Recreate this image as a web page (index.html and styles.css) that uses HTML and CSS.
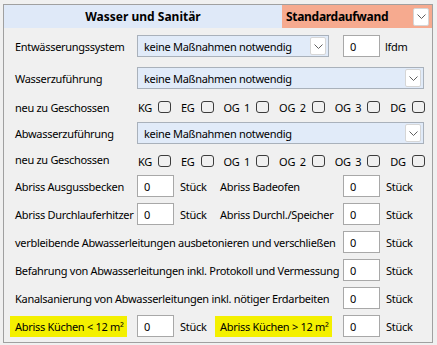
FILE: index.html
```html
<!DOCTYPE html>
<html lang="de">
<head>
    <meta charset="UTF-8">
    <meta name="viewport" content="width=device-width, initial-scale=1.0">
    <title>Wasser und Sanitär</title>
    <link rel="stylesheet" href="styles.css">
</head>
<body>
    <div class="panel">
        <div class="panel-head">
            <div class="head-title">Wasser und Sanitär</div>
            <div class="head-mode">
                <span>Standardaufwand</span>
                <span class="drop-btn head-btn"><svg width="9" height="5" viewBox="0 0 9 5"><polyline points="0.5,0.5 4.5,4.5 8.5,0.5" fill="none" stroke="#606060"/></svg></span>
            </div>
        </div>

        <div class="form">
            <!-- Entwässerung -->
            <span class="lbl">Entwässerungssystem</span>
            <div class="select sel-short">
                <span>keine Maßnahmen notwendig</span>
                <span class="drop-btn"><svg width="9" height="5" viewBox="0 0 9 5"><polyline points="0.5,0.5 4.5,4.5 8.5,0.5" fill="none" stroke="#606060"/></svg></span>
            </div>
            <div class="num col5">0</div>
            <span class="unit col6">lfdm</span>

            <!-- Wasserzuführung -->
            <span class="lbl">Wasserzuführung</span>
            <div class="select sel-long">
                <span>keine Maßnahmen notwendig</span>
                <span class="drop-btn"><svg width="9" height="5" viewBox="0 0 9 5"><polyline points="0.5,0.5 4.5,4.5 8.5,0.5" fill="none" stroke="#606060"/></svg></span>
            </div>

            <span class="lbl">neu zu Geschossen</span>
            <div class="floors">
                <span class="floor"><span>KG</span><i class="box"></i></span>
                <span class="floor"><span>EG</span><i class="box"></i></span>
                <span class="floor"><span>OG 1</span><i class="box"></i></span>
                <span class="floor"><span>OG 2</span><i class="box"></i></span>
                <span class="floor"><span>OG 3</span><i class="box"></i></span>
                <span class="floor"><span>DG</span><i class="box"></i></span>
            </div>

            <!-- Abwasserzuführung -->
            <span class="lbl">Abwasserzuführung</span>
            <div class="select sel-long">
                <span>keine Maßnahmen notwendig</span>
                <span class="drop-btn"><svg width="9" height="5" viewBox="0 0 9 5"><polyline points="0.5,0.5 4.5,4.5 8.5,0.5" fill="none" stroke="#606060"/></svg></span>
            </div>

            <span class="lbl">neu zu Geschossen</span>
            <div class="floors floors-low">
                <span class="floor"><span>KG</span><i class="box"></i></span>
                <span class="floor"><span>EG</span><i class="box"></i></span>
                <span class="floor"><span>OG 1</span><i class="box"></i></span>
                <span class="floor"><span>OG 2</span><i class="box"></i></span>
                <span class="floor"><span>OG 3</span><i class="box"></i></span>
                <span class="floor"><span>DG</span><i class="box"></i></span>
            </div>

            <!-- Abriss -->
            <span class="lbl">Abriss Ausgussbecken</span>
            <div class="num">0</div>
            <span class="unit">Stück</span>
            <span class="lbl lbl-right">Abriss Badeofen</span>
            <div class="num">0</div>
            <span class="unit">Stück</span>

            <span class="lbl">Abriss Durchlauferhitzer</span>
            <div class="num">0</div>
            <span class="unit">Stück</span>
            <span class="lbl lbl-right">Abriss Durchl./Speicher</span>
            <div class="num">0</div>
            <span class="unit">Stück</span>

            <span class="lbl lbl-wide">verbleibende Abwasserleitungen ausbetonieren und verschließen</span>
            <div class="num">0</div>
            <span class="unit">Stück</span>

            <span class="lbl lbl-wide">Befahrung von Abwasserleitungen inkl. Protokoll und Vermessung</span>
            <div class="num">0</div>
            <span class="unit">Stück</span>

            <span class="lbl lbl-wide">Kanalsanierung von Abwasserleitungen inkl. nötiger Erdarbeiten</span>
            <div class="num">0</div>
            <span class="unit">Stück</span>

            <span class="lbl"><mark class="hl">Abriss Küchen &lt; 12 m²</mark></span>
            <div class="num">0</div>
            <span class="unit">Stück</span>
            <span class="lbl lbl-right"><mark class="hl">Abriss Küchen &gt; 12 m²</mark></span>
            <div class="num">0</div>
            <span class="unit">Stück</span>
        </div>
    </div>
</body>
</html>
```

FILE: styles.css
```css
body {
    margin: 0;
    background-color: #f0f0f0;
    color: #000;
    font-family: "Noto Sans", "Open Sans", sans-serif;
    font-size: 11px;
    letter-spacing: -0.3px;
}

.panel {
    margin: 4px 0 0 3px;
    width: 428px;
    height: 337px;
    border: 1px solid #a0a0a0;
    background-color: #f0f0f0;
}

.panel-head {
    display: flex;
    height: 23px;
    background-color: #dfe9f8;
}

.head-title {
    flex: 1;
    display: flex;
    align-items: center;
    justify-content: center;
    font-weight: bold;
    font-size: 12px;
    letter-spacing: 0;
}

.head-mode {
    width: 150px;
    display: flex;
    align-items: center;
    justify-content: space-between;
    padding: 0 3px 0 4px;
    box-sizing: border-box;
    background-color: #f6aa8f;
    font-weight: bold;
    font-size: 12px;
}

.drop-btn {
    width: 16px;
    height: 18px;
    display: flex;
    align-items: center;
    justify-content: center;
    background-color: #fff;
    border: 1px solid #d6d6d6;
    border-radius: 2px;
    box-sizing: border-box;
}

/* form grid */
.form {
    display: grid;
    grid-template-columns: 122px 37px 46px 123px 37px 1fr;
    grid-template-rows: 32px 32px 26px 26px 26px repeat(6, 28px);
    align-items: center;
    padding: 2px 11px 0;
}

.lbl {
    grid-column: 1;
    white-space: nowrap;
}

.lbl-right {
    grid-column: 4;
}

.lbl-wide {
    grid-column: 1 / 5;
}

.select {
    height: 22px;
    display: flex;
    align-items: center;
    justify-content: space-between;
    padding: 0 2px 0 6px;
    box-sizing: border-box;
    background-color: #e1ebf9;
    border: 1px solid #a9b1bb;
}

.sel-short {
    grid-column: 2 / 5;
    width: 192px;
}

.sel-long {
    grid-column: 2 / 7;
    width: 287px;
}

.num {
    grid-column: 5;
    height: 22px;
    width: 37px;
    box-sizing: border-box;
    padding: 3px 6px 0;
    background-color: #fff;
    border: 1px solid #a8a8a8;
}

.lbl + .num {
    grid-column: 2;
}

.lbl-right + .num,
.lbl-wide + .num {
    grid-column: 5;
}

.unit {
    padding-left: 6px;
}

.col5 { grid-column: 5; }
.col6 { grid-column: 6; padding-left: 5px; }

.floors {
    grid-column: 2 / 7;
    display: flex;
    gap: 10px;
    padding-left: 1px;
    white-space: nowrap;
}

.floors-low {
    padding-top: 4px;
}

.floor {
    display: inline-flex;
    align-items: center;
    flex-shrink: 0;
    gap: 6px;
    word-spacing: 2px;
}

.box {
    width: 13px;
    height: 12px;
    flex-shrink: 0;
    box-sizing: border-box;
    border: 1px solid #3c3c3c;
    border-radius: 3px;
}

.hl {
    background-color: #f4f000;
    color: #000;
    margin-left: -5px;
    padding: 3px 3px 3px 5px;
}
```
